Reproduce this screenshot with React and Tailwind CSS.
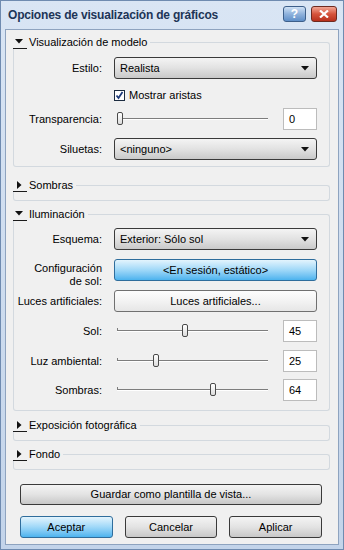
import React from 'react'

const line = 'border-[#d3d9df]'

function Arrow({ open }) {
  return open ? (
    <svg width="8" height="5" viewBox="0 0 8 5"><path d="M0 0h8L4 4.5z" fill="#111" /></svg>
  ) : (
    <svg width="5" height="8" viewBox="0 0 5 8"><path d="M0 0v8l4.5-4z" fill="#111" /></svg>
  )
}

function Group({ title, open, children }) {
  return (
    <div>
      <div className="flex h-[14px] items-start">
        <div className="w-[14px] h-[14px] border-b border-[#1a1a1a] flex items-center pl-[2px]">
          <div className={open ? '' : 'pl-[2px]'}><Arrow open={open} /></div>
        </div>
        <span className="ml-[2px] leading-[14px] whitespace-nowrap">{title}</span>
        <div className={`flex-1 ml-[3px] mt-[7px] h-[7px] border-t border-r ${line} rounded-tr-[3px]`} />
      </div>
      <div className={`border-x border-b ${line} rounded-b-[3px] ${open ? '' : 'h-[9px]'}`}>
        {children}
      </div>
    </div>
  )
}

function Select({ value }) {
  return (
    <div className="h-[22px] flex items-center justify-between pl-[5px] pr-[7px] rounded-[3px] border border-[#3a3a3a] bg-gradient-to-b from-[#f4f4f4] via-[#e2e2e2] to-[#c9c9c9]">
      <span>{value}</span>
      <svg width="8" height="5" viewBox="0 0 8 5"><path d="M0 0h8L4 4.5z" fill="#111" /></svg>
    </div>
  )
}

function Row({ label, children, className = '' }) {
  return (
    <div className={`flex items-center ${className}`}>
      <div className="w-[88px] text-right shrink-0">{label}</div>
      <div className="flex-1 ml-[12px]">{children}</div>
    </div>
  )
}

function Slider({ value, tick }) {
  return (
    <div className="flex items-center">
      <div className="relative flex-1 h-[14px] ml-[3px]">
        <div className="absolute left-0 right-0 top-[6px] h-[2px] border-t border-[#7d7d7d] border-b border-b-[#ffffff]" />
        {tick && <div className="absolute left-0 top-[4px] w-px h-[3px] bg-[#7d7d7d]" />}
        <div
          className="absolute top-0 w-[6px] h-[13px] rounded-[2px] border border-[#4a4a4a] bg-gradient-to-b from-[#ffffff] to-[#dcdcdc]"
          style={{ left: `${(value / 100) * 145}px` }}
        />
      </div>
      <div className="ml-[15px] w-[34px] h-[22px] border border-[#bcbcbc] bg-white flex items-center pl-[5px]">{value}</div>
    </div>
  )
}

function Button({ children, kind = 'gray', className = '' }) {
  const styles = {
    gray: 'border-[#3a3a3a] from-[#f4f4f4] via-[#e3e3e3] to-[#c8c8c8]',
    light: 'border-[#707070] from-[#fdfdfd] via-[#f3f3f3] to-[#e6e6e6]',
    blue: 'border-[#2f6d9c] from-[#e3f4fd] via-[#9fd8f8] to-[#4bb3ee]',
  }
  return (
    <div className={`flex items-center justify-center rounded-[3px] border bg-gradient-to-b ${styles[kind]} ${className}`}>
      {children}
    </div>
  )
}

export default function App() {
  return (
    <div className="w-[344px] h-[550px] bg-gradient-to-b from-[#d9e5f4] to-[#c3d4ea] border border-[#6f8bb0] flex flex-col font-['Liberation_Sans',Arial,sans-serif] text-[11px] text-black">
      {/* Title bar */}
      <div className="h-[28px] flex items-center justify-between pl-[7px] pr-[6px] shrink-0">
        <span className="text-[12px] font-bold text-[#1d3557] tracking-[-0.2px]">Opciones de visualización de gráficos</span>
        <div className="flex items-center gap-[5px] mt-[-2px]">
          <div className="w-[23px] h-[16px] rounded-[3px] border border-[#3d5f8a] bg-gradient-to-b from-[#cfe1f5] via-[#8fb2dc] to-[#5f8fc8] flex items-center justify-center text-white font-bold text-[12px] leading-none">?</div>
          <div className="w-[26px] h-[16px] rounded-[3px] border border-[#6e2a20] bg-gradient-to-b from-[#f0a594] via-[#d6533b] to-[#b8301c] flex items-center justify-center">
            <svg width="10" height="8" viewBox="0 0 10 8"><path d="M1 0.5l8 7M9 0.5l-8 7" stroke="#fff" strokeWidth="2.2" /></svg>
          </div>
        </div>
      </div>

      {/* Content */}
      <div className="flex-1 mx-[4px] mb-[4px] border border-[#8ea3bf] bg-[#f0f0f0] pl-[7px] pr-[8px] pt-[5px] flex flex-col">
        <Group title="Visualización de modelo" open>
          <div className="pt-[8px] pb-[6px] pr-[12px]">
            <Row label="Estilo:"><Select value="Realista" /></Row>
            <Row className="mt-[10px] h-[12px]">
              <div className="flex items-center">
                <div className="w-[11px] h-[11px] border border-[#1c2c40] bg-white flex items-center justify-center">
                  <svg width="9" height="9" viewBox="0 0 9 9"><path d="M1.5 4.5l2 2.5 4-6" stroke="#1f3b7a" strokeWidth="1.8" fill="none" /></svg>
                </div>
                <span className="ml-[4px]">Mostrar aristas</span>
              </div>
            </Row>
            <Row label="Transparencia:" className="mt-[7px]"><Slider value={0} /></Row>
            <Row label="Siluetas:" className="mt-[8px]"><Select value="<ninguno>" /></Row>
          </div>
        </Group>

        <div className="mt-[11px]"><Group title="Sombras" /></div>

        <div className="mt-[6px]">
          <Group title="Iluminación" open>
            <div className="pt-[7px] pb-[9px] pr-[12px]">
              <Row label="Esquema:"><Select value="Exterior: Sólo sol" /></Row>
              <div className="flex items-start mt-[9px]">
                <div className="w-[88px] text-right shrink-0 leading-[13px] pt-[3px]">Configuración<br />de sol:</div>
                <div className="flex-1 ml-[12px]">
                  <Button kind="blue" className="h-[22px]">&lt;En sesión, estático&gt;</Button>
                </div>
              </div>
              <Row label="Luces artificiales:" className="mt-[2px]">
                <Button kind="light" className="h-[22px]">Luces artificiales...</Button>
              </Row>
              <Row label="Sol:" className="mt-[8px]"><Slider value={45} tick /></Row>
              <Row label="Luz ambiental:" className="mt-[8px]"><Slider value={25} tick /></Row>
              <Row label="Sombras:" className="mt-[7px]"><Slider value={64} tick /></Row>
            </div>
          </Group>
        </div>

        <div className="mt-[7px]"><Group title="Exposición fotográfica" /></div>
        <div className="mt-[6px]"><Group title="Fondo" /></div>

        <div className="mt-[14px] pl-[7px] pr-[8px]">
          <Button className="h-[21px]">Guardar como plantilla de vista...</Button>
          <div className="mt-[11px] grid grid-cols-3 gap-[12px]">
            <Button kind="blue" className="h-[22px]">Aceptar</Button>
            <Button className="h-[22px]">Cancelar</Button>
            <Button className="h-[22px]">Aplicar</Button>
          </div>
        </div>
      </div>
    </div>
  )
}
